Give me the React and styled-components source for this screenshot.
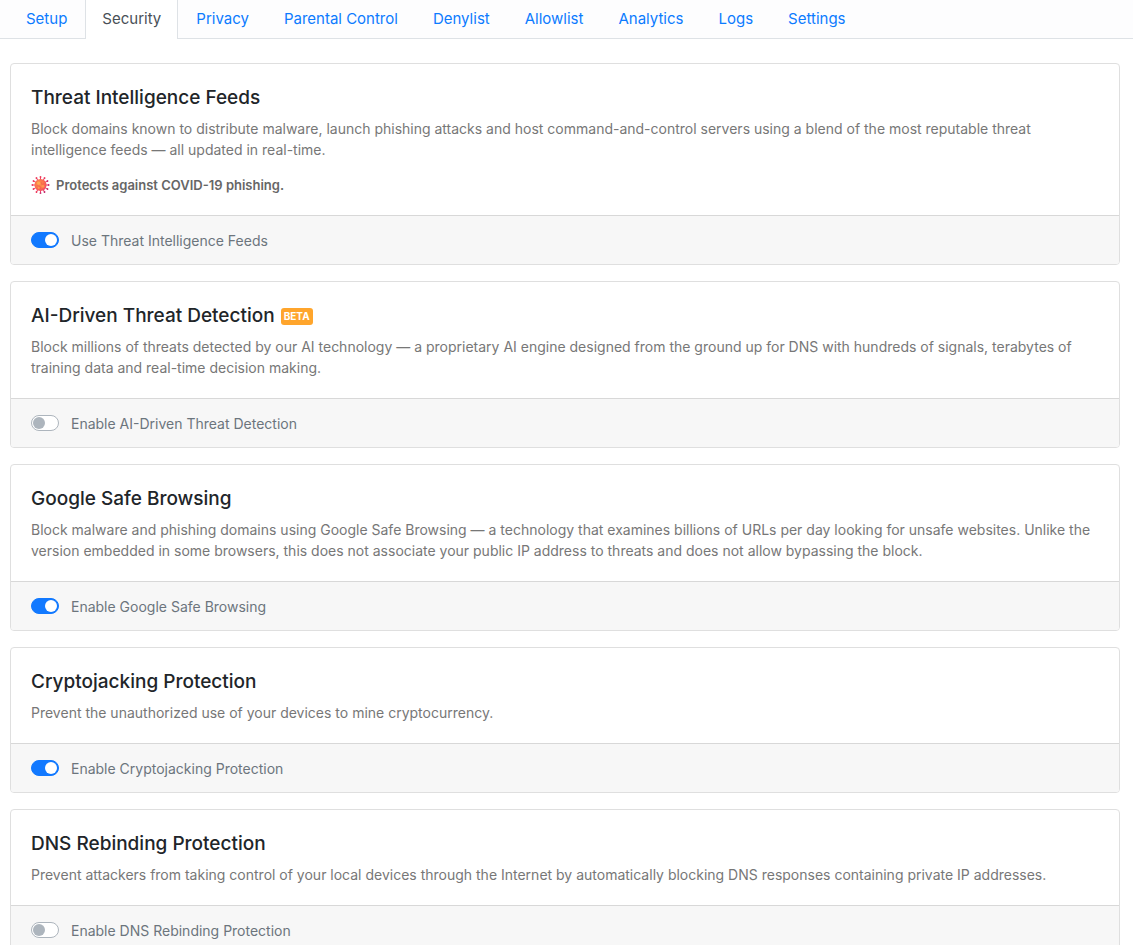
import React, { useState } from "react";
import styled, { createGlobalStyle } from "styled-components";

const GlobalStyle = createGlobalStyle`
  *, *::before, *::after { box-sizing: border-box; }
  body {
    margin: 0;
    background: #fff;
    color: #212529;
    font-family: Inter, "Liberation Sans", sans-serif;
    font-size: 14px;
  }
`;

const TabBar = styled.nav`
  display: flex;
  gap: 1px;
  height: 39px;
  padding-left: 9px;
  background: #fdfdfe;
  border-bottom: 1px solid #dee2e6;
`;

const Tab = styled.a`
  height: 39px;
  padding: 7px 16px;
  border: solid ${(p) => (p.$active ? "#dee2e6" : "transparent")};
  border-width: 0 1px;
  background: ${(p) => (p.$active ? "#fff" : "transparent")};
  color: ${(p) => (p.$active ? "#495057" : "#0c7bff")};
  font-size: 15px;
  line-height: 24px;
  text-decoration: none;
  white-space: nowrap;
`;

const Content = styled.main`
  display: flex;
  flex-direction: column;
  gap: 16px;
  padding: 24px 13px 24px 10px;
`;

const Card = styled.section`
  border: 1px solid #dfdfdf;
  border-radius: 4px;
  overflow: hidden;
  background: #fff;
`;

const CardBody = styled.div`
  padding: 20px;
`;

const Title = styled.h2`
  display: flex;
  align-items: center;
  gap: 6px;
  margin: 0 0 6px;
  font-size: 19px;
  font-weight: 500;
  line-height: 28px;
`;

const Badge = styled.span`
  padding: 0 3px;
  border-radius: 3px;
  background: #ffa52c;
  color: #fff;
  font-size: 10px;
  font-weight: 700;
  line-height: 17px;
`;

const Description = styled.p`
  margin: 0;
  color: #777;
  line-height: 21px;
`;

const Notice = styled.div`
  display: flex;
  align-items: center;
  gap: 6px;
  margin-top: 15px;
  color: #666;
  font-size: 13px;
  font-weight: 600;
  line-height: 20px;
`;

const CardFooter = styled.div`
  display: flex;
  padding: 16px 20px 14px;
  border-top: 1px solid #d8d8d8;
  background: #f7f7f7;
`;

const SwitchLabel = styled.label`
  display: flex;
  align-items: flex-start;
  gap: 12px;
  color: #6c757d;
  line-height: 18px;
  cursor: pointer;
`;

const Switch = styled.input`
  appearance: none;
  display: flex;
  align-items: center;
  flex-shrink: 0;
  width: 28px;
  height: 16px;
  margin: 0;
  padding: 0 1px;
  border: 1px solid #adb5bd;
  border-radius: 8px;
  background: #fff;
  cursor: pointer;

  &::before {
    content: "";
    width: 12px;
    height: 12px;
    border-radius: 50%;
    background: #adb5bd;
  }

  &:checked {
    justify-content: flex-end;
    border-color: #1279ff;
    background: #1279ff;
  }

  &:checked::before { background: #fff; }
`;

const SPIKES = Array.from({ length: 12 }, (_, i) => i * 30);

function VirusIcon() {
  return (
    <svg width="19" height="20" viewBox="0 0 20 20" aria-hidden="true">
      <defs>
        <radialGradient id="core" cx="0.4" cy="0.4" r="0.65">
          <stop offset="0" stopColor="#ff9a4c" />
          <stop offset="0.6" stopColor="#fb704c" />
          <stop offset="1" stopColor="#f0436a" />
        </radialGradient>
      </defs>
      {SPIKES.map((angle) => (
        <g key={angle} transform={`rotate(${angle} 10 10)`}>
          <path d="M10 5V1.5" stroke="#ea3a66" strokeWidth="1" />
          <circle cx="10" cy="1.5" r="1" fill={angle > 30 && angle < 210 ? "#c72a6c" : "#ee3a5c"} />
        </g>
      ))}
      <circle cx="10" cy="10" r="6.4" fill="url(#core)" />
      <circle cx="8" cy="8" r="1.7" fill="#ffac50" />
      <circle cx="12.6" cy="11.4" r="1.5" fill="#ff9650" />
      <circle cx="8.2" cy="13" r="1" fill="#ffa04b" />
      <path d="M10.6 6.5l.6 2.8 2.8-.6M6 10.8l3.4.3.6 3" fill="none" stroke="#ee5550" strokeWidth="0.6" />
    </svg>
  );
}

const TABS = [
  "Setup", "Security", "Privacy", "Parental Control", "Denylist",
  "Allowlist", "Analytics", "Logs", "Settings",
];

const FEATURES = [
  {
    id: "threat-feeds",
    title: "Threat Intelligence Feeds",
    text: "Block domains known to distribute malware, launch phishing attacks and host command-and-control servers using a blend of the most reputable threat intelligence feeds — all updated in real-time.",
    notice: "Protects against COVID-19 phishing.",
    label: "Use Threat Intelligence Feeds",
    on: true,
  },
  {
    id: "ai-detection",
    title: "AI-Driven Threat Detection",
    badge: "BETA",
    text: "Block millions of threats detected by our AI technology — a proprietary AI engine designed from the ground up for DNS with hundreds of signals, terabytes of training data and real-time decision making.",
    label: "Enable AI-Driven Threat Detection",
    on: false,
  },
  {
    id: "safe-browsing",
    title: "Google Safe Browsing",
    text: "Block malware and phishing domains using Google Safe Browsing — a technology that examines billions of URLs per day looking for unsafe websites. Unlike the version embedded in some browsers, this does not associate your public IP address to threats and does not allow bypassing the block.",
    label: "Enable Google Safe Browsing",
    on: true,
  },
  {
    id: "cryptojacking",
    title: "Cryptojacking Protection",
    text: "Prevent the unauthorized use of your devices to mine cryptocurrency.",
    label: "Enable Cryptojacking Protection",
    on: true,
  },
  {
    id: "dns-rebinding",
    title: "DNS Rebinding Protection",
    text: "Prevent attackers from taking control of your local devices through the Internet by automatically blocking DNS responses containing private IP addresses.",
    label: "Enable DNS Rebinding Protection",
    on: false,
  },
];

function FeatureCard({ feature }) {
  const [on, setOn] = useState(feature.on);
  return (
    <Card>
      <CardBody>
        <Title>
          {feature.title}
          {feature.badge && <Badge>{feature.badge}</Badge>}
        </Title>
        <Description>{feature.text}</Description>
        {feature.notice && (
          <Notice>
            <VirusIcon />
            {feature.notice}
          </Notice>
        )}
      </CardBody>
      <CardFooter>
        <SwitchLabel htmlFor={feature.id}>
          <Switch
            type="checkbox"
            id={feature.id}
            checked={on}
            onChange={(e) => setOn(e.target.checked)}
          />
          {feature.label}
        </SwitchLabel>
      </CardFooter>
    </Card>
  );
}

export default function App() {
  return (
    <>
      <GlobalStyle />
      <TabBar>
        {TABS.map((name) => (
          <Tab
            key={name}
            href={`#${name.toLowerCase().replace(" ", "-")}`}
            $active={name === "Security"}
            aria-current={name === "Security" ? "page" : undefined}
          >
            {name}
          </Tab>
        ))}
      </TabBar>
      <Content>
        {FEATURES.map((feature) => (
          <FeatureCard key={feature.id} feature={feature} />
        ))}
      </Content>
    </>
  );
}
